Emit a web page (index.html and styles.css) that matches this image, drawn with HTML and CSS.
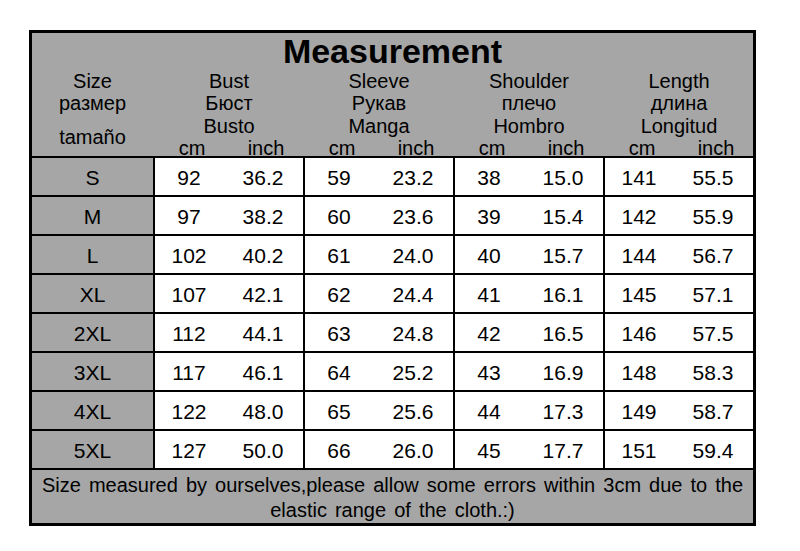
FILE: index.html
```html
<!DOCTYPE html>
<html>
<head>
<meta charset="utf-8">
<link rel="stylesheet" href="styles.css">
</head>
<body>
<div class="chart">
  <div class="head">
    <div class="title">Measurement</div>
    <div class="labels">
      <div class="lab size"><span>Size</span><span>размер</span><span class="tam">tamaño</span></div>
      <div class="lab"><span>Bust</span><span>Бюст</span><span>Busto</span><div class="units"><span>cm</span><span>inch</span></div></div>
      <div class="lab"><span>Sleeve</span><span>Рукав</span><span>Manga</span><div class="units"><span>cm</span><span>inch</span></div></div>
      <div class="lab"><span>Shoulder</span><span>плечо</span><span>Hombro</span><div class="units"><span>cm</span><span>inch</span></div></div>
      <div class="lab"><span>Length</span><span>длина</span><span>Longitud</span><div class="units"><span>cm</span><span>inch</span></div></div>
    </div>
  </div>
  <div class="grid">
    <div class="sz">S</div><div class="pair"><span>92</span><span>36.2</span></div><div class="pair"><span>59</span><span>23.2</span></div><div class="pair"><span>38</span><span>15.0</span></div><div class="pair"><span>141</span><span>55.5</span></div>
    <div class="sz">M</div><div class="pair"><span>97</span><span>38.2</span></div><div class="pair"><span>60</span><span>23.6</span></div><div class="pair"><span>39</span><span>15.4</span></div><div class="pair"><span>142</span><span>55.9</span></div>
    <div class="sz">L</div><div class="pair"><span>102</span><span>40.2</span></div><div class="pair"><span>61</span><span>24.0</span></div><div class="pair"><span>40</span><span>15.7</span></div><div class="pair"><span>144</span><span>56.7</span></div>
    <div class="sz">XL</div><div class="pair"><span>107</span><span>42.1</span></div><div class="pair"><span>62</span><span>24.4</span></div><div class="pair"><span>41</span><span>16.1</span></div><div class="pair"><span>145</span><span>57.1</span></div>
    <div class="sz">2XL</div><div class="pair"><span>112</span><span>44.1</span></div><div class="pair"><span>63</span><span>24.8</span></div><div class="pair"><span>42</span><span>16.5</span></div><div class="pair"><span>146</span><span>57.5</span></div>
    <div class="sz">3XL</div><div class="pair"><span>117</span><span>46.1</span></div><div class="pair"><span>64</span><span>25.2</span></div><div class="pair"><span>43</span><span>16.9</span></div><div class="pair"><span>148</span><span>58.3</span></div>
    <div class="sz">4XL</div><div class="pair"><span>122</span><span>48.0</span></div><div class="pair"><span>65</span><span>25.6</span></div><div class="pair"><span>44</span><span>17.3</span></div><div class="pair"><span>149</span><span>58.7</span></div>
    <div class="sz">5XL</div><div class="pair"><span>127</span><span>50.0</span></div><div class="pair"><span>66</span><span>26.0</span></div><div class="pair"><span>45</span><span>17.7</span></div><div class="pair"><span>151</span><span>59.4</span></div>
  </div>
  <div class="foot">Size measured by ourselves,please allow some errors within 3cm due to the<br>elastic range of the cloth.:)</div>
</div>
</body>
</html>
```
FILE: styles.css
```css
html, body {
  margin: 0;
  padding: 0;
  background: #fff;
}
body {
  font-family: "Liberation Sans", Arial, sans-serif;
  color: #000;
}
.chart {
  margin: 30px 0 0 29px;
  width: 727px;
  height: 496px;
  box-sizing: border-box;
  border: 3px solid #000;
  background: #a6a6a6;
}
.head {
  height: 123px;
  overflow: visible;
}
.title {
  font-size: 34px;
  font-weight: bold;
  line-height: 34px;
  text-align: center;
  padding-top: 1px;
  height: 36px;
}
.labels {
  display: grid;
  grid-template-columns: 121px repeat(4, 148px);
  column-gap: 2px;
  font-size: 20px;
  line-height: 22.3px;
}
.lab {
  display: flex;
  flex-direction: column;
  align-items: center;
}
.lab > span {
  display: block;
  white-space: nowrap;
}
.size .tam {
  margin-top: 11px;
}
.units {
  display: flex;
  width: 100%;
}
.units span {
  width: 74px;
  text-align: center;
}
.grid {
  display: grid;
  grid-template-columns: 121px repeat(4, 148px);
  grid-auto-rows: 37px;
  gap: 2px;
  background: #000;
  border-top: 2px solid #000;
  border-bottom: 2px solid #000;
  font-size: 21px;
}
.sz {
  background: #a6a6a6;
  display: flex;
  align-items: center;
  justify-content: center;
  padding-top: 3px;
  box-sizing: border-box;
}
.pair {
  background: #fff;
  display: flex;
  align-items: center;
  padding-top: 3px;
  box-sizing: border-box;
}
.pair span {
  width: 74px;
  box-sizing: border-box;
  padding-right: 6px;
  text-align: center;
}
.foot {
  font-size: 20px;
  line-height: 25px;
  word-spacing: 2.5px;
  text-align: center;
  padding-top: 3px;
  white-space: nowrap;
}
```
